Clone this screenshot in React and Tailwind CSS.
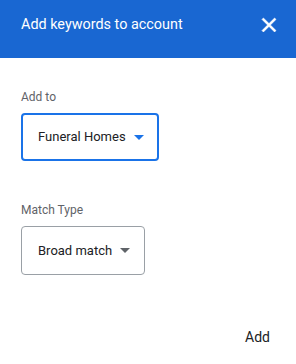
import React from 'react';

function Caret({ color }) {
  return (
    <svg width="10" height="5" viewBox="0 0 10 5" className="ml-[8px]">
      <path d="M0 0 L10 0 L5 5 Z" fill={color} />
    </svg>
  );
}

export default function App() {
  return (
    <div className="flex h-[364px] w-[296px] flex-col bg-white font-['Roboto',sans-serif]">
      {/* Header */}
      <div className="flex h-[58px] items-start justify-between bg-[#1967d2] pl-[21px] pr-[15px] pt-[15px]">
        <h1 className="text-[14.4px] leading-[20px] text-white">Add keywords to account</h1>
        <svg width="24" height="24" viewBox="0 0 24 24" className="-mt-[2px]">
          <path
            d="M19 6.41 17.59 5 12 10.59 6.41 5 5 6.41 10.59 12 5 17.59 6.41 19 12 13.41 17.59 19 19 17.59 13.41 12z"
            fill="white"
            stroke="white"
            strokeWidth="0.6"
          />
        </svg>
      </div>

      {/* Body */}
      <div className="flex flex-1 flex-col px-[21px] pt-[31px]">
        <p className="text-[12px] leading-[16px] text-[#5f6368]">Add to</p>
        <button className="mt-[8px] flex h-[48px] w-[138px] items-center rounded-[4px] border-2 border-[#1a73e8] pl-[15px] text-[13px] text-[#202124]">
          Funeral Homes
          <Caret color="#1a73e8" />
        </button>

        <p className="mt-[41px] text-[12px] leading-[16px] text-[#5f6368]">Match Type</p>
        <button className="mt-[8px] flex h-[49px] w-[124px] items-center rounded-[4px] border border-[#9aa0a6] pl-[16px] text-[13px] text-[#202124]">
          Broad match
          <Caret color="#5f6368" />
        </button>

        <div className="mt-auto flex justify-end pb-[16px] pr-[5px]">
          <button className="text-[14px] text-[#202124]">Add</button>
        </div>
      </div>
    </div>
  );
}
